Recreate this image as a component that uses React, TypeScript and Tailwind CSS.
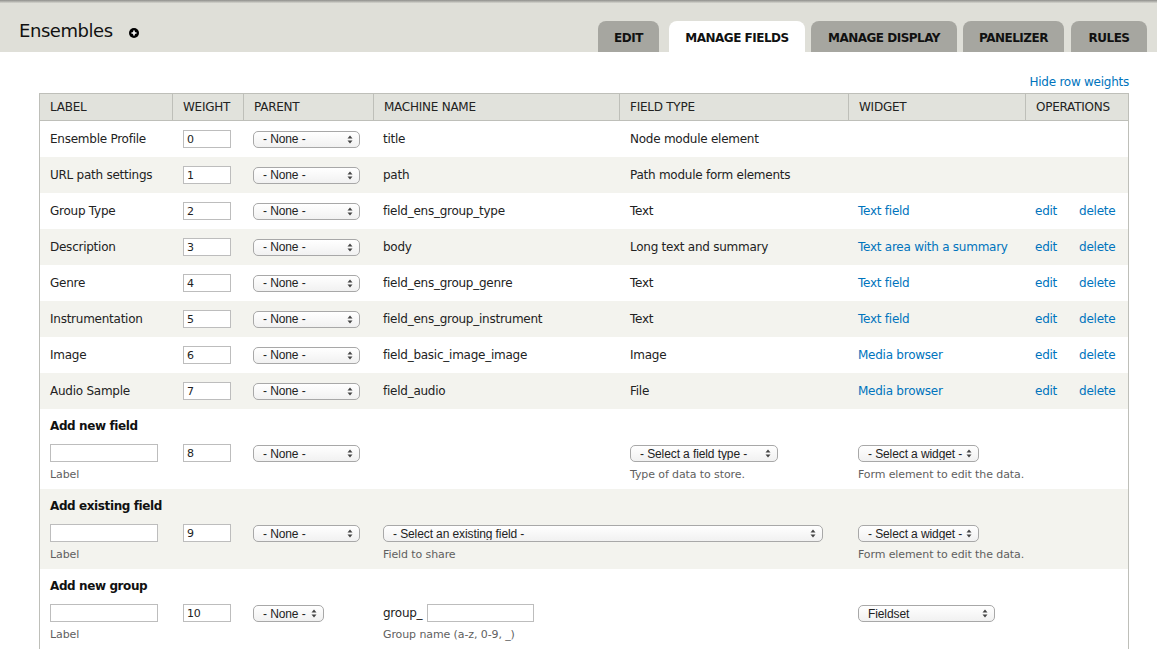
import React from 'react';

// Drupal "Seven" style manage fields screen

const COLS = 'grid-cols-[132px_71px_130px_246px_229px_177px_103px]';

interface FieldRow {
  label: string;
  weight: string;
  machine: string;
  type: string;
  widget?: string;
}

const rows: FieldRow[] = [
  { label: 'Ensemble Profile', weight: '0', machine: 'title', type: 'Node module element' },
  { label: 'URL path settings', weight: '1', machine: 'path', type: 'Path module form elements' },
  { label: 'Group Type', weight: '2', machine: 'field_ens_group_type', type: 'Text', widget: 'Text field' },
  { label: 'Description', weight: '3', machine: 'body', type: 'Long text and summary', widget: 'Text area with a summary' },
  { label: 'Genre', weight: '4', machine: 'field_ens_group_genre', type: 'Text', widget: 'Text field' },
  { label: 'Instrumentation', weight: '5', machine: 'field_ens_group_instrument', type: 'Text', widget: 'Text field' },
  { label: 'Image', weight: '6', machine: 'field_basic_image_image', type: 'Image', widget: 'Media browser' },
  { label: 'Audio Sample', weight: '7', machine: 'field_audio', type: 'File', widget: 'Media browser' },
];

const tabs = [
  { name: 'EDIT', w: 'w-[61px]', active: false },
  { name: 'MANAGE FIELDS', w: 'w-[136px]', active: true },
  { name: 'MANAGE DISPLAY', w: 'w-[146px]', active: false },
  { name: 'PANELIZER', w: 'w-[101px]', active: false },
  { name: 'RULES', w: 'w-[76px]', active: false },
];

function Arrows() {
  return (
    <svg width="6" height="9" viewBox="0 0 6 9" className="shrink-0">
      <path d="M3 0.5 L5.5 3.5 H0.5 Z" fill="#444" />
      <path d="M3 8.5 L5.5 5.5 H0.5 Z" fill="#444" />
    </svg>
  );
}

function Select({ text, w }: { text: string; w: string }) {
  return (
    <div
      className={`${w} h-[17px] rounded-[5px] border border-[#a8a8a8] bg-linear-to-b from-white to-[#f1f1f1] flex items-center pl-[9px] pr-[6px] text-[12px] tracking-[-0.1px] font-['Liberation_Sans',Arial,sans-serif] text-[#222]`}
    >
      <span className="flex-1 truncate leading-none">{text}</span>
      <Arrows />
    </div>
  );
}

function TextInput({ value = '', w }: { value?: string; w: string }) {
  return (
    <div className={`${w} h-[18px] border border-[#bdbdbd] bg-white flex items-center px-[3px] text-[11px] text-[#222] leading-none`}>
      {value}
    </div>
  );
}

function Desc({ children }: { children: React.ReactNode }) {
  return <div className="mt-[6px] text-[11px] tracking-[-0.1px] text-[#5f5f5f] leading-[14px]">{children}</div>;
}

function AddSection({
  title,
  bg,
  weight,
  parentW,
  children,
}: {
  title: string;
  bg: string;
  weight: string;
  parentW: string;
  children: React.ReactNode;
}) {
  return (
    <div className={bg}>
      <div className="h-[33px] flex items-center pt-[1px] pl-[10px] font-bold text-[12px] tracking-[-0.4px] text-[#111]">{title}</div>
      <div className={`grid ${COLS} h-[47px] pt-[2px]`}>
        <div className="pl-[10px]">
          <TextInput w="w-[108px]" />
          <Desc>Label</Desc>
        </div>
        <div className="pl-[11px]">
          <TextInput value={weight} w="w-[48px]" />
        </div>
        <div className="pl-[10px] pt-[1px]">
          <Select text="- None -" w={parentW} />
        </div>
        {children}
      </div>
    </div>
  );
}

export default function App() {
  return (
    <div className="w-[1157px] h-[649px] overflow-hidden bg-white font-['DejaVu_Sans',sans-serif] text-[#222]">
      {/* En-tête */}
      <div className="h-[52px] bg-[#dfdfd8] relative flex items-end">
        <div className="absolute top-0 left-0 right-0 h-[3px] bg-linear-to-b from-[#8f8f8c] to-[#d6d6cf]" />
        <div className="flex items-center self-start mt-[19px] ml-[19px]">
          <h1 className="text-[18px] tracking-[-0.45px] font-normal text-[#111] leading-[24px]">Ensembles</h1>
          <span className="ml-[16px] mt-[4px] w-[10px] h-[10px] rounded-full bg-black flex items-center justify-center">
            <svg width="6" height="6" viewBox="0 0 6 6">
              <path d="M3 0.5 V5.5 M0.5 3 H5.5" stroke="white" strokeWidth="1.6" />
            </svg>
          </span>
        </div>
        <div className="ml-auto mr-[10px] flex items-end">
          {tabs.map((t, i) => (
            <div
              key={t.name}
              className={`${t.w} h-[31px] pt-[2px] rounded-t-[8px] flex items-center justify-center text-[12px] font-bold tracking-[-0.5px] ${
                t.active ? 'bg-white text-[#111]' : 'bg-[#a6a6a0] text-[#111]'
              } ${i === 1 ? 'ml-[10px]' : i === 4 ? 'ml-[7px]' : i > 0 ? 'ml-[6px]' : ''}`}
            >
              {t.name}
            </div>
          ))}
        </div>
      </div>

      <div className="ml-[39px] w-[1090px]">
        <div className="h-[41px] flex items-end justify-end pb-[3px]">
          <a className="text-[12px] tracking-[-0.25px] text-[#0074bd] leading-[16px]">Hide row weights</a>
        </div>

        <div className="border-x border-[#bebfb9] text-[12px] tracking-[-0.25px]">
          {/* Header */}
          <div className={`grid ${COLS} h-[28px] bg-[#e1e2dc] border-y border-[#bebfb9] items-stretch`}>
            {['LABEL', 'WEIGHT', 'PARENT', 'MACHINE NAME', 'FIELD TYPE', 'WIDGET', 'OPERATIONS'].map((h, i) => (
              <div
                key={h}
                className={`flex items-center ${i === 0 ? 'pl-[10px]' : 'pl-[10px] border-l border-[#bebfb9]'}`}
              >
                {h}
              </div>
            ))}
          </div>

          {rows.map((r, i) => (
            <div key={r.label} className={`grid ${COLS} h-[36px] items-center ${i % 2 === 1 ? 'bg-[#f3f3ee]' : 'bg-white'}`}>
              <div className="pl-[10px]">{r.label}</div>
              <div className="pl-[11px]">
                <TextInput value={r.weight} w="w-[48px]" />
              </div>
              <div className="pl-[10px]">
                <Select text="- None -" w="w-[107px]" />
              </div>
              <div className="pl-[10px]">{r.machine}</div>
              <div className="pl-[11px]">{r.type}</div>
              <div className="pl-[10px] text-[#0074bd]">{r.widget}</div>
              <div className="pl-[10px] text-[#0074bd] flex">
                {r.widget && (
                  <>
                    <span>edit</span>
                    <span className="ml-[22px]">delete</span>
                  </>
                )}
              </div>
            </div>
          ))}

          <AddSection title="Add new field" bg="bg-white" weight="8" parentW="w-[107px]">
            <div />
            <div className="pl-[11px] pt-[1px]">
              <Select text="- Select a field type -" w="w-[148px]" />
              <Desc>Type of data to store.</Desc>
            </div>
            <div className="pl-[10px] pt-[1px]">
              <Select text="- Select a widget -" w="w-[121px]" />
              <Desc>Form element to edit the data.</Desc>
            </div>
            <div />
          </AddSection>

          <AddSection title="Add existing field" bg="bg-[#f3f3ee]" weight="9" parentW="w-[107px]">
            <div className="col-span-2 pl-[10px] pt-[1px]">
              <Select text="- Select an existing field -" w="w-[440px]" />
              <Desc>Field to share</Desc>
            </div>
            <div className="pl-[10px] pt-[1px]">
              <Select text="- Select a widget -" w="w-[121px]" />
              <Desc>Form element to edit the data.</Desc>
            </div>
            <div />
          </AddSection>

          <AddSection title="Add new group" bg="bg-white" weight="10" parentW="w-[71px]">
            <div className="col-span-2 pl-[10px]">
              <div className="flex items-center">
                <span className="mr-[5px] text-[12px]">group_</span>
                <TextInput w="w-[107px]" />
              </div>
              <Desc>Group name (a-z, 0-9, _)</Desc>
            </div>
            <div className="pl-[10px] pt-[1px]">
              <Select text="Fieldset" w="w-[137px]" />
            </div>
            <div />
          </AddSection>
        </div>
      </div>
    </div>
  );
}
